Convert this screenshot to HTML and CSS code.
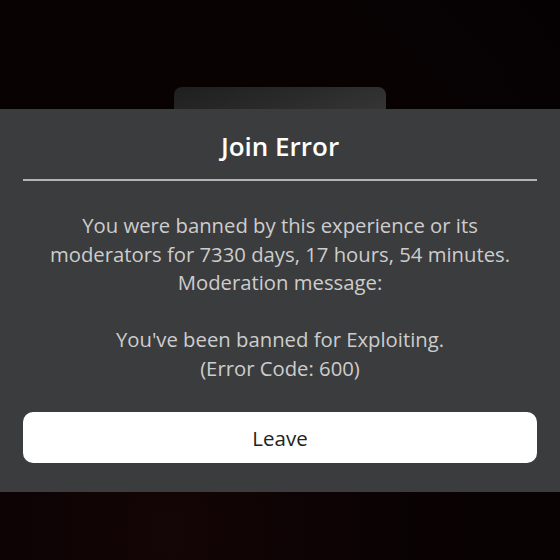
FILE: index.html
```html
<!DOCTYPE html>
<html>

<head>
    <link rel="stylesheet" href="styles.css">
</head>

<body>

    <div class="backdrop">
        <div class="top-area">
            <div class="tab"></div>
        </div>

        <!-- Join error prompt -->
        <div class="prompt">
            <div class="prompt-title">Join Error</div>
            <div class="divider"></div>
            <p class="prompt-message">
                You were banned by this experience or its<br>
                moderators for 7330 days, 17 hours, 54 minutes.<br>
                Moderation message:<br>
                <br>
                You've been banned for Exploiting.<br>
                (Error Code: 600)
            </p>
            <button class="leave-btn">Leave</button>
        </div>
    </div>

</body>

</html>
```

FILE: styles.css
```css
body {
    margin: 0;
    background-color: #0a0203;
    font-family: "Open Sans", "Liberation Sans", sans-serif;
}

.backdrop {
    width: 560px;
    height: 560px;
    background: radial-gradient(ellipse at 30% 95%, #140506 0%, #0a0203 40%, #050102 100%);
}

.top-area {
    height: 109px;
    display: flex;
    justify-content: center;
    align-items: flex-end;
}

.tab {
    width: 212px;
    height: 22px;
    border-radius: 8px 8px 0 0;
    background: linear-gradient(160deg, #1f1f1f 0%, #292929 50%, #353535 100%);
}

/* Prompt styles */
.prompt {
    background-color: #3b3c3e;
    padding: 22px 23px 29px 23px;
    display: flex;
    flex-direction: column;
}

.prompt-title {
    color: #ffffff;
    font-size: 26px;
    font-weight: 600;
    line-height: 30px;
    text-align: center;
}

.divider {
    height: 2px;
    background-color: #b4b4b4;
    margin-top: 18px;
}

.prompt-message {
    margin: 30px 0 0 0;
    color: #cdcdcd;
    font-size: 20.3px;
    line-height: 28.5px;
    text-align: center;
}

.leave-btn {
    margin-top: 30px;
    height: 51px;
    border: none;
    border-radius: 10px;
    background-color: #ffffff;
    color: #222222;
    font-family: "Open Sans", "Liberation Sans", sans-serif;
    font-size: 20.5px;
    cursor: pointer;
}
```
